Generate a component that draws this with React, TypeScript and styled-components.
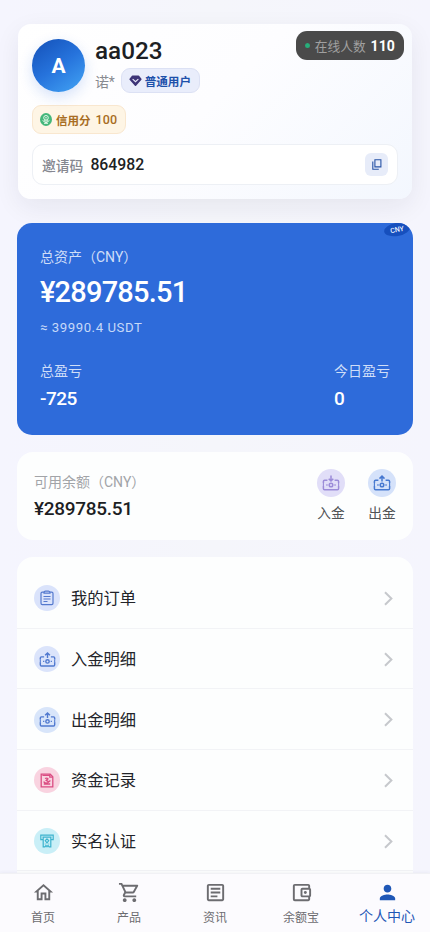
import React from "react";
import styled, { createGlobalStyle } from "styled-components";
import {
  MdOutlineHome,
  MdOutlineShoppingCart,
  MdOutlineArticle,
  MdOutlineAccountBalanceWallet,
  MdPerson,
} from "react-icons/md";

const GlobalStyle = createGlobalStyle`
  * { box-sizing: border-box; }
  html, body { margin: 0; padding: 0; }
  body {
    font-family: Roboto, "Noto Sans CJK SC", sans-serif;
    color: #1d1f24;
    background: #f5f6fc;
    overflow: hidden;
  }
  svg { display: block; flex: none; }
`;

const Page = styled.div`
  height: 932px;
  display: flex;
  flex-direction: column;
  overflow: hidden;
  background: linear-gradient(90deg, #f5f5fe 0%, #f5f6fb 50%, #f5f5fd 100%);
`;

const Content = styled.main`
  flex: 1;
  min-height: 0;
  overflow: hidden;
  padding: 24px 17px 0;
`;

const Profile = styled.section`
  position: relative;
  height: 175px;
  margin: 0 1px 24px;
  padding: 15px 14px 14px;
  border-radius: 13px;
  background: linear-gradient(135deg, #ffffff 0%, #fdfdff 48%, #f3f7fe 100%);
  box-shadow: 0 8px 26px rgba(30, 35, 60, 0.07);
`;

const ProfileTop = styled.div`
  display: flex;
  height: 54px;
`;

const Avatar = styled.div`
  width: 53px;
  height: 53px;
  border-radius: 50%;
  display: flex;
  align-items: center;
  justify-content: center;
  padding-top: 1px;
  color: #fff;
  font-size: 21px;
  font-weight: 700;
  background: linear-gradient(145deg, #1553bb 5%, #2673dc 50%, #43a5f5 100%);
  box-shadow: 0 5px 14px rgba(35, 100, 220, 0.18);
`;

const Identity = styled.div`
  margin-left: 10px;
  display: flex;
  flex-direction: column;
`;

const UserName = styled.div`
  height: 30px;
  line-height: 23px;
  font-size: 24.3px;
  font-weight: 500;
`;

const SubRow = styled.div`
  display: flex;
  align-items: center;
  height: 25px;
  gap: 6px;
`;

const RealName = styled.span`
  font-size: 14px;
  color: #888b91;
  letter-spacing: -0.2px;
`;

const LevelTag = styled.span`
  height: 25px;
  width: 79px;
  display: flex;
  align-items: center;
  gap: 3px;
  padding: 1px 0 0 7px;
  border: 1px solid #dce1f4;
  border-radius: 9px;
  background: #e9edfb;
  color: #1d50aa;
  font-size: 11.6px;
  font-weight: 700;
  white-space: nowrap;
`;

const CreditTag = styled.div`
  width: 94px;
  height: 29px;
  margin-top: 12px;
  padding-left: 7px;
  display: flex;
  align-items: center;
  gap: 4px;
  border: 1px solid #f9e7cf;
  border-radius: 9px;
  background: #fef5e5;
  color: #a86d23;
  font-size: 11.5px;
  font-weight: 700;
  white-space: nowrap;
`;

const CreditScore = styled.span`
  font-size: 12.5px;
  font-weight: 500;
  margin-left: 1px;
  letter-spacing: 0.2px;
`;

const InviteBox = styled.div`
  height: 41px;
  margin-top: 10px;
  padding: 0 9px 0 9px;
  display: flex;
  align-items: center;
  border: 1px solid #edf0f5;
  border-radius: 11px;
  background: #fff;
`;

const InviteLabel = styled.span`
  font-size: 13.8px;
  font-weight: 500;
  color: #858790;
`;

const InviteCode = styled.span`
  flex: 1;
  margin-left: 7px;
  font-size: 15.8px;
  font-weight: 500;
`;

const CopyButton = styled.button`
  width: 23px;
  height: 23px;
  padding: 0;
  border: 0;
  border-radius: 6px;
  background: #e7ecf9;
  display: flex;
  align-items: center;
  justify-content: center;
`;

const OnlinePill = styled.div`
  position: absolute;
  top: 7px;
  right: 8px;
  width: 108px;
  height: 29px;
  padding: 0 9px;
  border-radius: 11px;
  background: #4a4a4a;
  display: flex;
  align-items: center;
  color: #a0a0a0;
  font-size: 12.7px;
  white-space: nowrap;
`;

const OnlineDot = styled.i`
  width: 5px;
  height: 5px;
  margin-right: 5px;
  border-radius: 50%;
  background: #27ae7a;
`;

const OnlineCount = styled.b`
  margin-left: 5px;
  color: #fff;
  font-size: 14px;
  letter-spacing: 0.1px;
`;

const Assets = styled.section`
  position: relative;
  overflow: hidden;
  height: 212px;
  margin-bottom: 17px;
  padding: 24px 23px 0;
  border-radius: 15px;
  background: #2e6bda;
  color: #fff;
`;

const CurrencyBadge = styled.span`
  position: absolute;
  top: 0;
  right: 3px;
  width: 26px;
  height: 13px;
  border-radius: 50%;
  background: #164fbd;
  color: #eaf2ff;
  font-size: 7px;
  font-weight: 500;
  line-height: 14px;
  text-align: center;
  transform: rotate(-10deg);
`;

const AssetLabel = styled.div`
  height: 20px;
  line-height: 20px;
  font-size: 14px;
  color: #cfdef8;
  white-space: nowrap;
`;

const AssetTotal = styled.div`
  height: 34px;
  margin-top: 8px;
  line-height: 34px;
  font-size: 29px;
  font-weight: 500;
  letter-spacing: -0.8px;
`;

const AssetApprox = styled.div`
  height: 18px;
  margin-top: 10px;
  line-height: 18px;
  font-size: 13.2px;
  letter-spacing: 0.55px;
  color: #c6d9f8;
`;

const ProfitRow = styled.div`
  display: flex;
  justify-content: space-between;
  margin-top: 24px;
`;

const ProfitValue = styled.div`
  margin-top: 6px;
  height: 24px;
  line-height: 24px;
  font-size: 19px;
  font-weight: 500;
  letter-spacing: -0.5px;
`;

const Balance = styled.section`
  height: 88px;
  margin-bottom: 17px;
  padding: 17px 17px 0;
  border-radius: 16px;
  background: #fdfefe;
  display: flex;
  justify-content: space-between;
`;

const BalanceLabel = styled.div`
  height: 26px;
  line-height: 26px;
  font-size: 14px;
  color: #a2a4a8;
`;

const BalanceValue = styled.div`
  line-height: 27px;
  font-size: 19px;
  font-weight: 500;
  letter-spacing: -0.3px;
`;

const Actions = styled.div`
  display: flex;
  gap: 23px;
`;

const Action = styled.div`
  width: 28px;
  display: flex;
  flex-direction: column;
  align-items: center;
  gap: 6px;
  font-size: 13.7px;
  line-height: 21px;
  color: #515356;
  white-space: nowrap;
`;

const Bubble = styled.span<{ $size: number; $bg: string; $fg: string }>`
  width: ${(p) => p.$size}px;
  height: ${(p) => p.$size}px;
  flex: none;
  border-radius: 50%;
  display: flex;
  align-items: center;
  justify-content: center;
  background: ${(p) => p.$bg};
  color: ${(p) => p.$fg};
`;

const Menu = styled.section`
  height: 380px;
  padding-top: 11px;
  border-radius: 16px 16px 0 0;
  background: #fdfefe;
`;

const MenuRow = styled.div`
  height: 60.7px;
  padding: 1px 20px 0 17px;
  display: flex;
  align-items: center;
  border-bottom: 1px solid #f2f3f6;
`;

const MenuText = styled.span`
  flex: 1;
  margin-left: 11px;
  padding-top: 2px;
  font-size: 16.3px;
  line-height: 22px;
  color: #222429;
`;

const TabBar = styled.nav`
  height: 59px;
  flex: none;
  display: grid;
  grid-template-columns: repeat(5, 1fr);
  background: #fcfbfe;
  border-top: 1px solid #f1f1f5;
  box-shadow: 0 -1px 3px rgba(30, 40, 70, 0.05);
  position: relative;
`;

const Tab = styled.div<{ $active?: boolean }>`
  display: flex;
  flex-direction: column;
  align-items: center;
  padding-top: 7px;
  color: ${(p) => (p.$active ? "#1f57b6" : "#6c6c70")};
  font-size: ${(p) => (p.$active ? 14 : 12)}px;
  line-height: 20px;
  white-space: nowrap;
`;

const TabText = styled.span<{ $active?: boolean }>`
  margin-top: ${(p) => (p.$active ? 2 : 4)}px;
`;

const Diamond = () => (
  <svg width="13" height="12" viewBox="0 0 13 12">
    <path
      d="M3.6 1.3h5.8l2.4 3-5.3 5.9L1.2 4.3z"
      fill="#3d3477"
      stroke="#3d3477"
      strokeWidth="1.6"
      strokeLinejoin="round"
    />
    <path d="m4 4.4 2.5 2.2L9 4.4" fill="none" stroke="#e9e9fa" strokeWidth="1.2" strokeLinecap="round" />
  </svg>
);

const CreditIcon = () => (
  <svg width="12" height="13" viewBox="0 0 12 13">
    <ellipse cx="6" cy="6.5" rx="6" ry="6.4" fill="#45b77b" />
    <g fill="none" stroke="#e6f9eb" strokeWidth="1">
      <circle cx="6" cy="4.8" r="2.3" />
      <path d="M5.2 4.8h1.6M2.6 7.5 6 9.8l3.4-2.3M4.1 7 6 8.4 7.9 7M4 10.3h4" />
    </g>
  </svg>
);

const CopyIcon = () => (
  <svg width="10" height="11" viewBox="0 0 10 11" fill="none" stroke="#2753a5" strokeWidth="1.1">
    <path d="M2.9.8h6v7.1h-6z" />
    <path d="M.8 2.6v7.6h6" />
  </svg>
);

const CashIcon = ({ down = false, size = 18 }: { down?: boolean; size?: number }) => (
  <svg width={size} height={size} viewBox="0 0 18 18" fill="none" stroke="currentColor" strokeWidth="1.5">
    <path d="M5.4 6.2H2.6Q1.4 6.2 1.4 7.5v1.6M1.4 12v2.5q0 1.3 1.2 1.3h12.8q1.2 0 1.2-1.3V12M16.6 9.1V7.5q0-1.3-1.2-1.3h-2.8" />
    <path d="M1.4 9v3.1M16.6 9v3.1" strokeWidth="1.1" />
    <circle cx="9" cy="11" r="1.8" />
    <path d="M4.3 11h1.3M12.4 11h1.3" />
    <path d={down ? "M9 1.6v5.2M6.7 4.7 9 7l2.3-2.3" : "M9 7.4V2.2M6.5 4.6 9 2.1l2.5 2.5"} />
  </svg>
);

const OrderIcon = () => (
  <svg width="14" height="16" viewBox="0 0 14 16" fill="none" stroke="currentColor" strokeWidth="1.2">
    <path d="M4 2.2H2.3Q1 2.2 1 3.5v9.8q0 1.3 1.3 1.3h9.4q1.3 0 1.3-1.3V3.5q0-1.3-1.3-1.3H10" />
    <path d="M4 3.2q0-2 1.5-2h3q1.5 0 1.5 2zM3.5 6.5h7M3.5 9h7M3.5 11.5h4" />
  </svg>
);

const RecordIcon = () => (
  <svg width="14" height="15" viewBox="0 0 14 15" fill="none" stroke="currentColor" strokeWidth="1.3">
    <path d="M1.2 1.2h9l2.6 2.6v10H1.2z" />
    <path d="M2.4 2.4h7M9.8 1.2v2.9h3" />
    <path d="M5 5.5q2-1 3 .3L6.2 7.3l2.2 1.3M3.6 8.6q1.6 2.4 4.4.9l2.4-2M3.8 11h6.4" />
  </svg>
);

const VerifyIcon = () => (
  <svg width="14" height="14" viewBox="0 0 14 14" fill="none" stroke="currentColor" strokeWidth="1.2">
    <path d="M3 5.7H.8V1.2h12.4v4.5H11M2.5 3.2h9M3.2 3.2v9.6h1.7L6 11.5l1 1.3 1-1.3 1.1 1.3h1.7V3.2" />
    <path d="M7 4.8 8.7 6.5 7 9 5.3 6.5zM4.8 10h.8M8.4 10h.8" />
  </svg>
);

const Chevron = () => (
  <svg width="9" height="15" viewBox="0 0 9 15" fill="none" stroke="#c6c8cc" strokeWidth="2">
    <path d="m1 1.2 6.4 6.3L1 13.8" />
  </svg>
);

const menuItems = [
  { label: "我的订单", bg: "#dae3fb", fg: "#5479ce", icon: <OrderIcon /> },
  { label: "入金明细", bg: "#dbe4fb", fg: "#5079cf", icon: <CashIcon size={17} /> },
  { label: "出金明细", bg: "#d8e5fa", fg: "#5079cf", icon: <CashIcon size={17} /> },
  { label: "资金记录", bg: "#f9d3e0", fg: "#da4c82", icon: <RecordIcon /> },
  { label: "实名认证", bg: "#c9eff7", fg: "#3db3ce", icon: <VerifyIcon /> },
];

const tabs = [
  { label: "首页", Icon: MdOutlineHome },
  { label: "产品", Icon: MdOutlineShoppingCart },
  { label: "资讯", Icon: MdOutlineArticle },
  { label: "余额宝", Icon: MdOutlineAccountBalanceWallet },
  { label: "个人中心", Icon: MdPerson, active: true },
];

export default function App() {
  return (
    <Page>
      <GlobalStyle />
      <Content>
        <Profile>
          <ProfileTop>
            <Avatar>A</Avatar>
            <Identity>
              <UserName>aa023</UserName>
              <SubRow>
                <RealName>诺*</RealName>
                <LevelTag>
                  <Diamond />
                  普通用户
                </LevelTag>
              </SubRow>
            </Identity>
          </ProfileTop>
          <CreditTag>
            <CreditIcon />
            信用分
            <CreditScore>100</CreditScore>
          </CreditTag>
          <InviteBox>
            <InviteLabel>邀请码</InviteLabel>
            <InviteCode>864982</InviteCode>
            <CopyButton aria-label="复制">
              <CopyIcon />
            </CopyButton>
          </InviteBox>
          <OnlinePill>
            <OnlineDot />
            在线人数
            <OnlineCount>110</OnlineCount>
          </OnlinePill>
        </Profile>

        <Assets>
          <CurrencyBadge>CNY</CurrencyBadge>
          <AssetLabel>总资产（CNY）</AssetLabel>
          <AssetTotal>¥289785.51</AssetTotal>
          <AssetApprox>≈ 39990.4 USDT</AssetApprox>
          <ProfitRow>
            <div>
              <AssetLabel>总盈亏</AssetLabel>
              <ProfitValue>-725</ProfitValue>
            </div>
            <div>
              <AssetLabel>今日盈亏</AssetLabel>
              <ProfitValue>0</ProfitValue>
            </div>
          </ProfitRow>
        </Assets>

        <Balance>
          <div>
            <BalanceLabel>可用余额（CNY）</BalanceLabel>
            <BalanceValue>¥289785.51</BalanceValue>
          </div>
          <Actions>
            <Action>
              <Bubble $size={28} $bg="#e1def8" $fg="#9b8bd8">
                <CashIcon down />
              </Bubble>
              入金
            </Action>
            <Action>
              <Bubble $size={28} $bg="#d5e2fa" $fg="#4678d0">
                <CashIcon />
              </Bubble>
              出金
            </Action>
          </Actions>
        </Balance>

        <Menu>
          {menuItems.map((m) => (
            <MenuRow key={m.label}>
              <Bubble $size={26} $bg={m.bg} $fg={m.fg}>
                {m.icon}
              </Bubble>
              <MenuText>{m.label}</MenuText>
              <Chevron />
            </MenuRow>
          ))}
        </Menu>
      </Content>
      <TabBar>
        {tabs.map(({ label, Icon, active }) => (
          <Tab key={label} $active={active}>
            <Icon size={23} />
            <TabText $active={active}>{label}</TabText>
          </Tab>
        ))}
      </TabBar>
    </Page>
  );
}
